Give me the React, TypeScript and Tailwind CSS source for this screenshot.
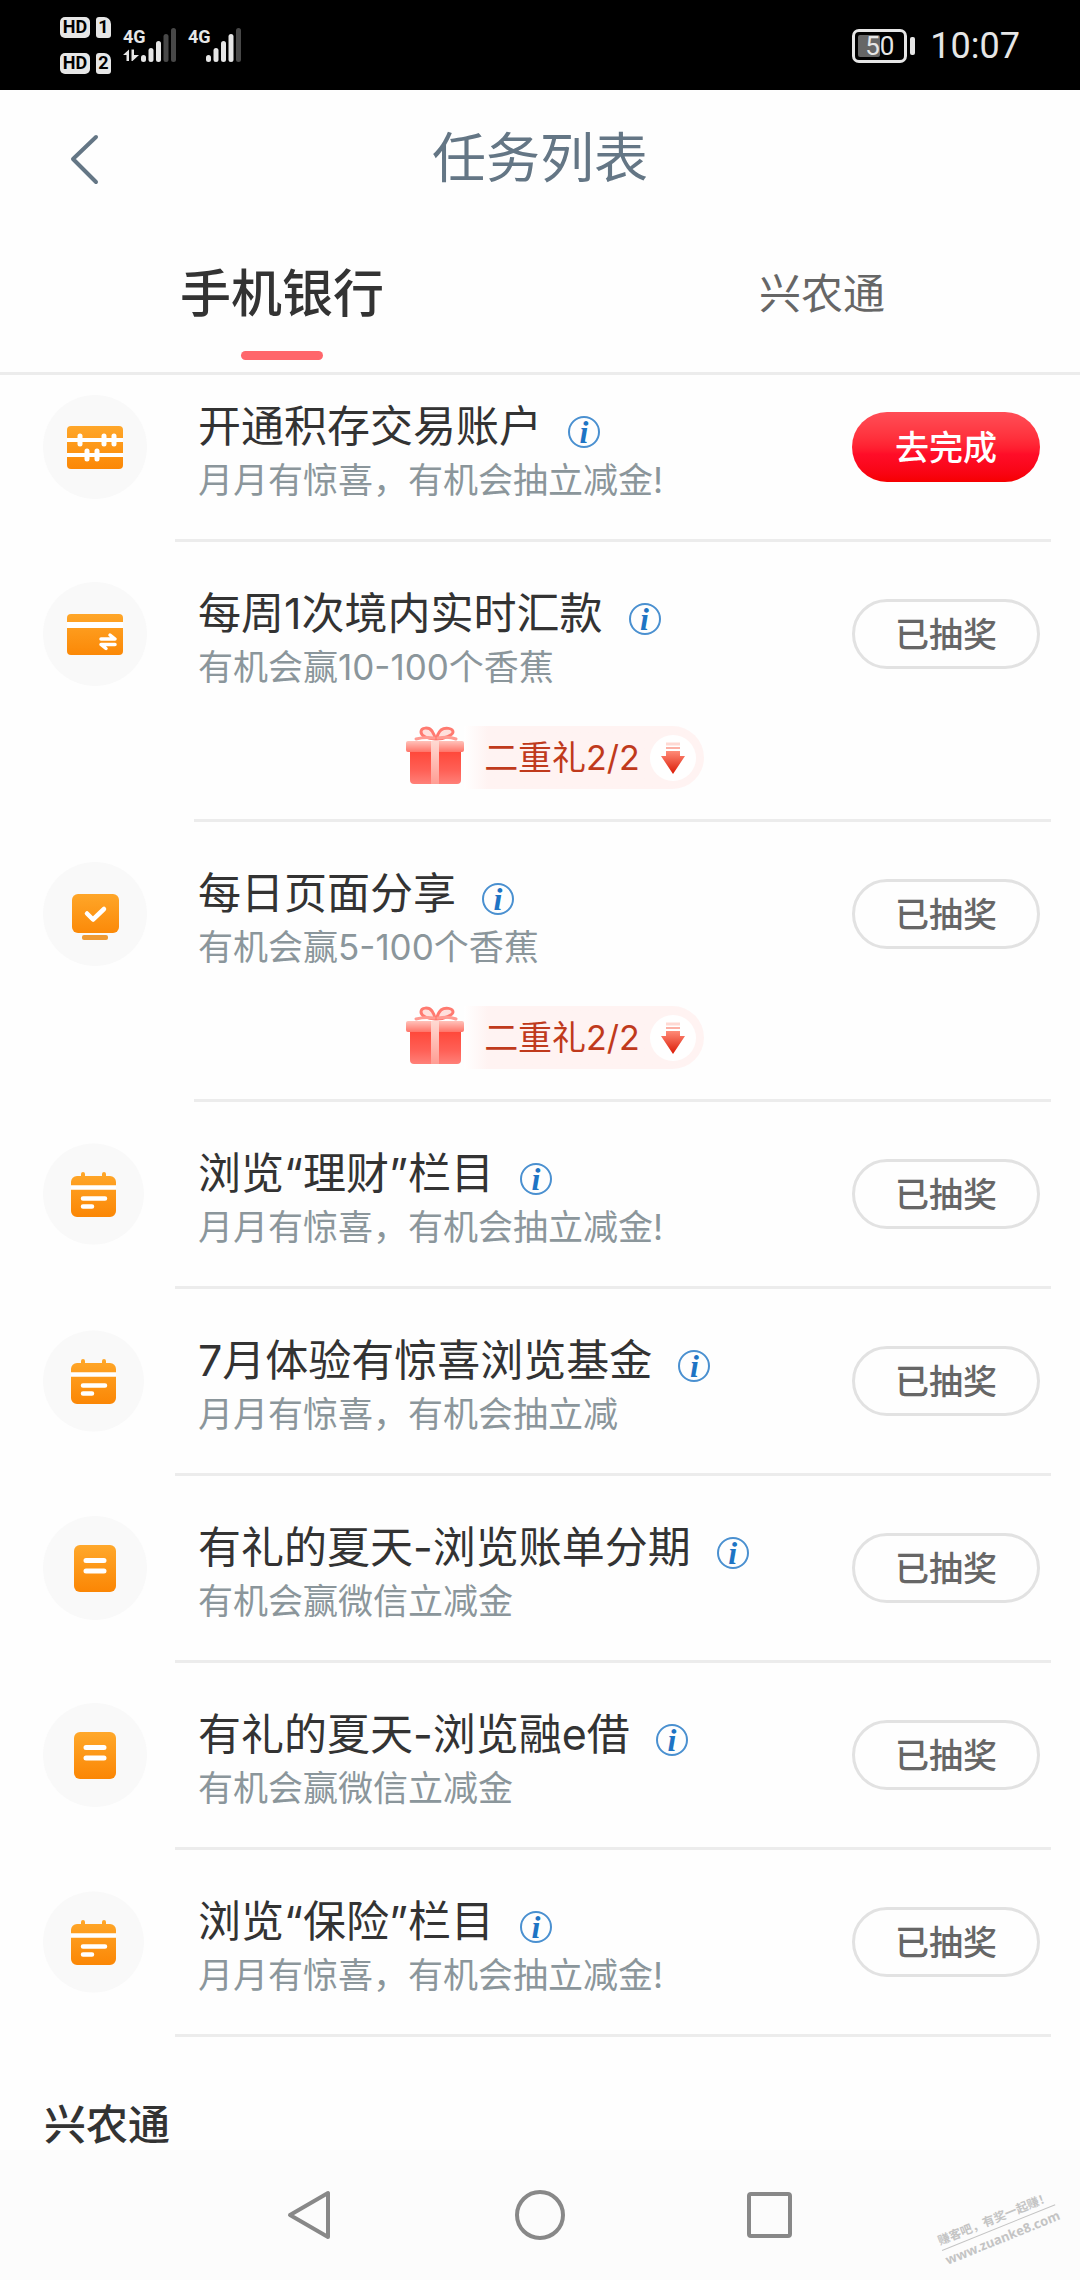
import React, { useId, useState } from 'react';

type IconName = 'abacus' | 'card' | 'monitor' | 'calendar' | 'note';

type Task = {
  id: number;
  icon: IconName;
  title: string;
  desc: string;
  done: boolean;
  gift?: string;
};

const TASKS: Task[] = [
  { id: 1, icon: 'abacus', title: '开通积存交易账户', desc: '月月有惊喜，有机会抽立减金!', done: false },
  { id: 2, icon: 'card', title: '每周1次境内实时汇款', desc: '有机会赢10-100个香蕉', done: true, gift: '二重礼2/2' },
  { id: 3, icon: 'monitor', title: '每日页面分享', desc: '有机会赢5-100个香蕉', done: true, gift: '二重礼2/2' },
  { id: 4, icon: 'calendar', title: '浏览“理财”栏目', desc: '月月有惊喜，有机会抽立减金!', done: true },
  { id: 5, icon: 'calendar', title: '7月体验有惊喜浏览基金', desc: '月月有惊喜，有机会抽立减', done: true },
  { id: 6, icon: 'note', title: '有礼的夏天-浏览账单分期', desc: '有机会赢微信立减金', done: true },
  { id: 7, icon: 'note', title: '有礼的夏天-浏览融e借', desc: '有机会赢微信立减金', done: true },
  { id: 8, icon: 'calendar', title: '浏览“保险”栏目', desc: '月月有惊喜，有机会抽立减金!', done: true },
];

const TABS = ['手机银行', '兴农通'];

function Signal({ level, data }: { level: number; data?: boolean }) {
  return (
    <svg className="overflow-visible" width="54" height="36" viewBox="0 0 54 36" aria-hidden="true">
      <text x="0" y="16" fill="#e6e6e6" fontSize="18" fontWeight="700" fontFamily="Roboto, sans-serif">
        4G
      </text>
      {data && <path d="M0 28 6 22.5V34H3.500V28ZM8.500 22.500H11V28H16L9.500 34H8.500Z" fill="#e6e6e6" />}
      {[7, 14, 21, 28, 34].map((h, i) => (
        <rect key={h} x={18 + i * 7.5} y={35 - h} width="5" height={h} rx="2.500" fill={i < level ? '#e6e6e6' : '#484848'} />
      ))}
    </svg>
  );
}

function HdBadge({ sim }: { sim: number }) {
  return (
    <div className="flex items-center gap-1.5 text-black">
      <span className="flex h-[21px] w-[30px] items-center justify-center rounded-[5px] bg-[#e6e6e6] font-[Roboto,sans-serif] text-[18px] leading-none font-bold">
        HD
      </span>
      <span className="flex h-[21px] w-[15px] items-center justify-center rounded-[3px] rounded-tr-[7px] bg-[#e6e6e6] font-[Roboto,sans-serif] text-[18px] leading-none font-bold">
        {sim}
      </span>
    </div>
  );
}

function StatusBar() {
  return (
    <div className="flex h-[90px] items-center justify-between bg-black px-[60px] text-[#e6e6e6]">
      <div className="flex items-center gap-3">
        <div className="flex flex-col gap-[15px]">
          <HdBadge sim={1} />
          <HdBadge sim={2} />
        </div>
        <div className="flex gap-[11px]">
          <Signal level={3} data />
          <Signal level={4} />
        </div>
      </div>
      <div className="flex items-center gap-[15px] pt-0.5 font-[Roboto,sans-serif]">
        <div className="flex items-center gap-[3px]">
          <div className="relative flex h-[34px] w-[55px] items-center justify-center rounded-[7px] border-3 border-[#e6e6e6]">
            <div className="absolute inset-y-[3px] left-[3px] w-[22px] rounded-[2px] bg-[#666]" />
            <span className="relative text-[26px] leading-none">50</span>
          </div>
          <div className="h-[18px] w-[5px] rounded-[2px] bg-[#e6e6e6]" />
        </div>
        <span className="text-[36px] leading-none">10:07</span>
      </div>
    </div>
  );
}

function TaskIcon({ name }: { name: IconName }) {
  const grad = `fill-${useId()}`;
  const fill = `url(#${grad})`;
  return (
    <svg className="size-[104px] shrink-0" viewBox="0 0 104 104" aria-hidden="true">
      <defs>
        <linearGradient id={grad} gradientUnits="userSpaceOnUse" x1="0" y1="28" x2="0" y2="76">
          <stop offset="0" stopColor="#ffa92c" />
          <stop offset="1" stopColor="#fb8604" />
        </linearGradient>
      </defs>
      {name === 'calendar' ? <circle cx="50.500" cy="52" r="50.500" fill="#f9f9f9" /> : <circle cx="52" cy="52" r="52" fill="#f9f9f9" />}
      {name === 'abacus' && (
        <>
          <rect x="24" y="31" width="56" height="43" rx="4" fill={fill} />
          <g stroke="#fff" fill="none">
            <path d="M24 45H80M24 60H80" strokeWidth="4" />
            <path d="M37 41V49M61 41V49M71 41V49M44 56V64M54 56V64" strokeWidth="5" strokeLinecap="round" />
          </g>
        </>
      )}
      {name === 'card' && (
        <>
          <rect x="24" y="32" width="56" height="41" rx="4" fill={fill} />
          <path d="M24 43H80" stroke="#fff" strokeWidth="6" />
          <path d="M58 57H72L67 53M72 62.500H58L63 66.500" fill="none" stroke="#fff" strokeWidth="3.500" strokeLinecap="round" strokeLinejoin="round" />
        </>
      )}
      {name === 'monitor' && (
        <>
          <rect x="29" y="32" width="47" height="39" rx="6" fill={fill} />
          <rect x="39" y="73" width="26" height="5" rx="2" fill="#ef9a33" />
          <path d="M44 51.500 50 57.500 61 47" fill="none" stroke="#fff" strokeWidth="4.500" strokeLinecap="round" strokeLinejoin="round" />
        </>
      )}
      {name === 'calendar' && (
        <>
          <path d="M34 34H38V32A2 2 0 0 1 42 32V34H59V32A2 2 0 0 1 63 32V34H67A6 6 0 0 1 73 40V69A6 6 0 0 1 67 75H34A6 6 0 0 1 28 69V40A6 6 0 0 1 34 34Z" fill={fill} />
          <path d="M28 45.500H73" stroke="#fff" strokeWidth="4.500" />
          <path d="M40 56.500H62M40 64.500H49" stroke="#fff" strokeWidth="4.500" strokeLinecap="round" />
        </>
      )}
      {name === 'note' && (
        <>
          <rect x="31" y="29" width="42" height="47" rx="6" fill={fill} />
          <path d="M43 44.500H61M43 55H61" stroke="#fff" strokeWidth="5" strokeLinecap="round" />
        </>
      )}
    </svg>
  );
}

function GiftIcon() {
  const id = useId();
  return (
    <svg className="h-[60px] w-[58px] shrink-0" viewBox="0 0 58 60" aria-hidden="true">
      <defs>
        <linearGradient id={`${id}box`} x1="0" y1="0" x2="0" y2="1">
          <stop offset="0" stopColor="#ff4638" />
          <stop offset="0.6" stopColor="#ff6056" />
          <stop offset="1" stopColor="#ff8078" />
        </linearGradient>
        <linearGradient id={`${id}lid`} x1="0" y1="0" x2="0" y2="1">
          <stop offset="0" stopColor="#ffc2ba" />
          <stop offset="1" stopColor="#ff7468" />
        </linearGradient>
        <linearGradient id={`${id}ribbon`} x1="0" y1="0" x2="0" y2="1">
          <stop offset="0" stopColor="#ffd9d2" />
          <stop offset="1" stopColor="#ff9d94" />
        </linearGradient>
      </defs>
      <path d="M4 24H55V54A4 4 0 0 1 51 58H8A4 4 0 0 1 4 54Z" fill={`url(#${id}box)`} />
      <rect x="0" y="15" width="58" height="11" rx="2" fill={`url(#${id}lid)`} />
      <rect x="25" y="15" width="8" height="43" fill={`url(#${id}ribbon)`} />
      <path
        d="M29 13C22 13 15 10 15 6C15 1 23 1 26 5C28 8 29 11 29 13ZM31 13C38 13 47 9 47 6C47 2 39 1 35 4C32 7 31 10 31 13Z"
        fill="#ffe0dc"
        stroke="#ff7a70"
        strokeWidth="3"
      />
      <path d="M28 12C21 11 14 12 10 13M32 12C38 11 45 11 50 13" fill="none" stroke="#ff9b92" strokeWidth="3" strokeLinecap="round" />
    </svg>
  );
}

function ArrowIcon() {
  const id = useId();
  return (
    <svg width="24" height="32" viewBox="0 0 24 32" aria-hidden="true">
      <defs>
        <linearGradient id={id} x1="0" y1="0" x2="0" y2="1">
          <stop offset="0" stopColor="#ff8b78" />
          <stop offset="1" stopColor="#db1a05" />
        </linearGradient>
      </defs>
      <path d="M5 2H19" stroke="#ffd9d3" strokeWidth="3" />
      <path d="M5 6H19" stroke="#fcb0a5" strokeWidth="2" />
      <path d="M5 9H19V14H24L12 32 0 14H5Z" fill={`url(#${id})`} />
    </svg>
  );
}

function TaskRow({ task }: { task: Task }) {
  return (
    <li>
      <div className="flex h-[184px] items-center pr-10 pl-[43px]">
        <TaskIcon name={task.icon} />
        <div className="ml-[51px] min-w-0 flex-1 pt-2.5">
          <div className="flex items-center gap-[26px]">
            <h2 className="text-[43px] leading-[56px] whitespace-nowrap text-[#333]">{task.title}</h2>
            <button
              type="button"
              aria-label={`${task.title}说明`}
              className="mt-3 flex size-8 shrink-0 items-center justify-center rounded-full border-2 border-[#4a90d0] font-['Liberation_Serif',serif] text-[32px] leading-none font-bold text-[#1e74c4] italic"
            >
              i
            </button>
          </div>
          <p className="text-[35px] leading-[52px] whitespace-nowrap text-[#8b969b]">{task.desc}</p>
        </div>
        {task.done ? (
          <button type="button" className="h-[70px] w-[188px] shrink-0 rounded-full border-3 border-[#e2e2e2] text-[34px] font-medium text-[#666]">
            已抽奖
          </button>
        ) : (
          <button
            type="button"
            className="h-[70px] w-[188px] shrink-0 rounded-full bg-linear-to-b from-[#ff4d56] via-[#ff0d28] via-60% to-[#f60000] text-[34px] font-medium text-white"
          >
            去完成
          </button>
        )}
      </div>
      {task.gift && (
        <div className="flex justify-center pb-[30px] pl-[30px]">
          <button type="button" className="flex items-start text-[34px] text-[#c03a1c]">
            <GiftIcon />
            <span className="flex h-[63px] items-center gap-2.5 rounded-r-full bg-linear-to-r from-white to-[#fff3f2] to-10% pr-2 pl-5">
              {task.gift}
              <span className="flex size-[46px] items-center justify-center rounded-full bg-white">
                <ArrowIcon />
              </span>
            </span>
          </button>
        </div>
      )}
      <div className={`mr-[29px] h-[3px] bg-[#ececec] ${task.gift ? 'ml-[194px]' : 'ml-[175px]'}`} />
    </li>
  );
}

function NavBar() {
  return (
    <nav className="sticky bottom-0 mt-auto flex h-[130px] items-center justify-center gap-[180px] bg-[#fcfcfc]">
      <button type="button" aria-label="返回">
        <svg width="50" height="50" viewBox="0 0 50 50" fill="none" stroke="#888" strokeWidth="4" strokeLinejoin="round">
          <path d="M5 25 43 3V47Z" />
        </svg>
      </button>
      <button type="button" aria-label="主屏幕">
        <svg width="50" height="50" viewBox="0 0 50 50" fill="none" stroke="#888" strokeWidth="4">
          <circle cx="25" cy="25" r="23" />
        </svg>
      </button>
      <button type="button" aria-label="最近任务">
        <svg width="50" height="50" viewBox="0 0 50 50" fill="none" stroke="#888" strokeWidth="4">
          <rect x="4" y="4" width="41" height="42" rx="2" />
        </svg>
      </button>
      <div className="absolute right-5 bottom-8 -rotate-22 font-['Noto_Sans','Noto_Sans_CJK_SC',sans-serif] text-[#c4c4c4]">
        <p className="border-b border-[#c4c4c4] text-[12px] leading-[18px] font-bold whitespace-nowrap">赚客吧，有奖一起赚！</p>
        <p className="text-[13px] leading-[20px] font-bold">www.zuanke8.com</p>
      </div>
    </nav>
  );
}

export default function App() {
  const [tab, setTab] = useState(0);

  return (
    <div className="flex min-h-screen flex-col bg-[#fefefe] font-[Inter,'Noto_Sans_CJK_SC',sans-serif]">
      <StatusBar />

      <header className="grid h-[138px] grid-cols-[1fr_auto_1fr] items-center text-[#647685]">
        <button type="button" aria-label="返回" className="ml-[68px] w-[34px]">
          <svg width="34" height="54" viewBox="0 0 34 54" fill="none" stroke="currentColor" strokeWidth="4" strokeLinecap="round" strokeLinejoin="round">
            <path d="M28 5 5 27 28 50" />
          </svg>
        </button>
        <h1 className="text-[54px] leading-none">任务列表</h1>
      </header>

      <div role="tablist" className="flex h-[147px] border-b-3 border-[#ececec]">
        {TABS.map((name, i) => (
          <button
            key={name}
            type="button"
            role="tab"
            aria-selected={tab === i}
            onClick={() => setTab(i)}
            className="flex flex-1 flex-col items-center justify-between pt-[31px] pb-3 pl-6"
          >
            <span className={tab === i ? 'text-[51px] leading-[70px] font-medium text-[#333]' : 'text-[42px] leading-[70px] text-[#666]'}>
              {name}
            </span>
            {tab === i && <span className="h-[9px] w-[82px] rounded-full bg-[#ff666b]" />}
          </button>
        ))}
      </div>

      <main className="overflow-hidden">
        {/* list sits slightly scrolled under the tabs */}
        <ul className="-mt-5">
          {TASKS.map((task) => (
            <TaskRow key={task.id} task={task} />
          ))}
        </ul>
        <h2 className="pt-[63px] pl-11 text-[42px] leading-[50px] font-medium text-[#333]">兴农通</h2>
      </main>

      <NavBar />
    </div>
  );
}
